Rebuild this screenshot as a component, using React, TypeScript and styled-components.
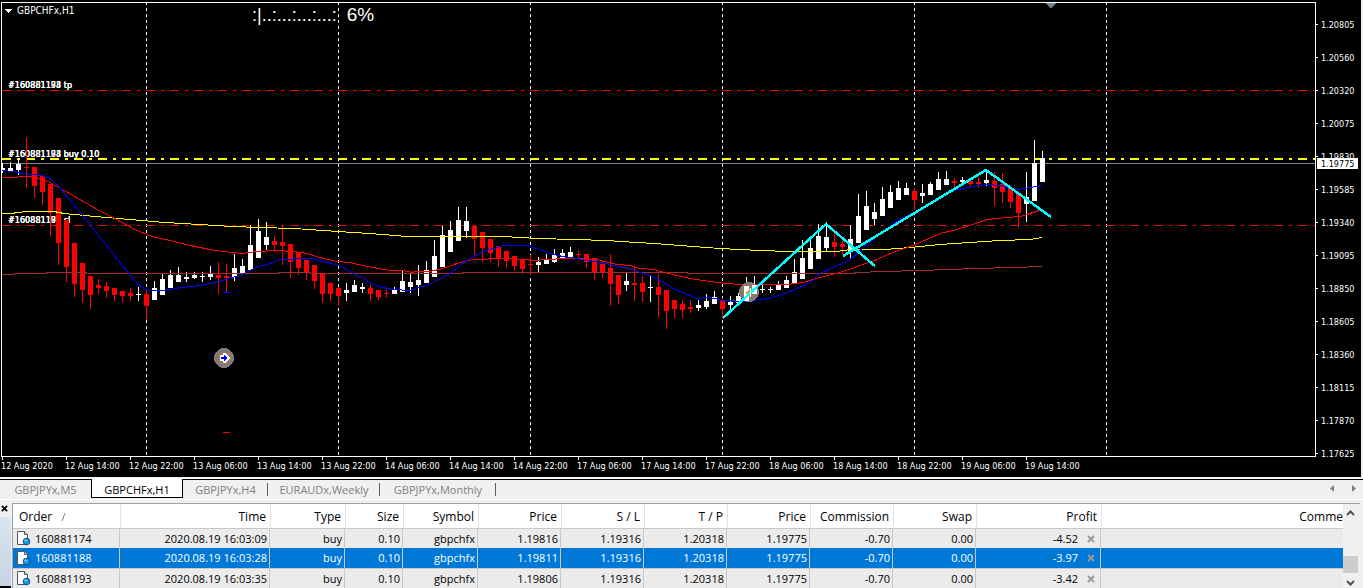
import React from "react";
import styled, { createGlobalStyle } from "styled-components";

const GlobalStyle = createGlobalStyle`
  *, *::before, *::after { box-sizing: border-box; }
  body {
    margin: 0;
    background: #f0f0f0;
    font-family: "Open Sans", "Noto Sans", sans-serif;
    font-size: 11px;
    color: #000;
  }
  button { font: inherit; margin: 0; padding: 0; border: 0; background: none; }
`;

/* ---------- chart data: [direction, high, body top, body bottom, low] ---------- */

type Candle = ["u" | "d", number, number, number, number];

const candles: Candle[] = [
  ["u", 163, 168, 171, 173], ["u", 162, 168, 171, 172], ["u", 158, 164, 170, 175],
  ["d", 137, 167, 168, 188], ["d", 167, 167, 186, 198], ["d", 176, 176, 192, 205],
  ["d", 184, 184, 213, 236], ["d", 198, 198, 243, 265], ["d", 220, 220, 267, 282],
  ["d", 243, 243, 284, 297], ["d", 263, 263, 290, 303], ["d", 276, 276, 295, 309],
  ["d", 279, 285, 288, 294], ["d", 282, 286, 291, 298], ["d", 288, 288, 295, 301],
  ["d", 291, 291, 296, 302], ["d", 288, 293, 296, 301], ["u", 287, 294, 295, 301],
  ["d", 290, 294, 306, 320], ["u", 281, 288, 300, 300], ["u", 274, 279, 295, 295],
  ["u", 270, 275, 288, 288], ["u", 267, 275, 282, 282], ["u", 272, 277, 279, 282],
  ["u", 272, 275, 278, 279], ["u", 272, 276, 277, 282], ["u", 266, 274, 277, 280],
  ["d", 262, 275, 278, 294], ["d", 264, 276, 278, 293], ["u", 254, 268, 277, 281],
  ["u", 259, 266, 273, 273], ["u", 225, 245, 270, 270], ["u", 219, 231, 258, 258],
  ["u", 222, 237, 245, 250], ["d", 236, 241, 245, 252], ["d", 226, 242, 246, 265],
  ["d", 244, 244, 262, 278], ["d", 252, 252, 268, 275], ["d", 260, 260, 273, 280],
  ["d", 265, 265, 281, 289], ["d", 273, 273, 294, 303], ["d", 283, 283, 294, 301],
  ["d", 287, 288, 296, 306], ["u", 283, 290, 293, 301], ["u", 280, 285, 292, 292],
  ["u", 283, 287, 289, 293], ["d", 284, 288, 294, 301], ["d", 290, 290, 297, 300],
  ["d", 290, 293, 294, 298], ["u", 287, 289, 294, 294], ["u", 271, 281, 292, 292],
  ["u", 274, 282, 287, 293], ["u", 265, 280, 285, 296], ["u", 261, 270, 283, 283],
  ["u", 240, 256, 277, 277], ["u", 226, 235, 267, 267], ["u", 221, 230, 252, 252],
  ["u", 207, 220, 241, 241], ["u", 207, 221, 231, 238], ["d", 226, 226, 239, 255],
  ["d", 232, 232, 248, 262], ["d", 239, 239, 253, 262], ["d", 246, 246, 259, 267],
  ["d", 251, 251, 261, 268], ["d", 256, 256, 266, 271], ["d", 260, 260, 269, 274],
  ["d", 255, 264, 265, 275], ["u", 257, 262, 265, 272], ["u", 254, 259, 264, 264],
  ["u", 249, 255, 262, 263], ["u", 249, 253, 259, 259], ["u", 247, 252, 257, 259],
  ["d", 251, 254, 255, 259], ["d", 254, 254, 262, 268], ["d", 258, 258, 272, 280],
  ["d", 261, 264, 273, 278], ["d", 254, 268, 284, 306], ["d", 275, 275, 295, 304],
  ["u", 273, 281, 285, 291], ["d", 267, 283, 285, 301], ["d", 276, 283, 292, 302],
  ["u", 276, 287, 288, 302], ["d", 274, 287, 295, 317], ["d", 290, 290, 311, 329],
  ["d", 300, 300, 309, 318], ["d", 300, 304, 310, 318], ["d", 300, 307, 309, 313],
  ["u", 300, 305, 308, 311], ["u", 294, 301, 307, 309], ["u", 291, 297, 304, 304],
  ["d", 298, 300, 309, 318], ["u", 296, 302, 305, 310], ["u", 293, 296, 303, 303],
  ["u", 277, 286, 301, 301], ["u", 276, 285, 294, 294], ["u", 285, 289, 290, 293],
  ["u", 287, 289, 290, 293], ["u", 281, 284, 290, 290], ["u", 276, 280, 288, 288],
  ["u", 259, 272, 283, 283], ["u", 240, 258, 279, 279], ["u", 236, 248, 269, 269],
  ["u", 224, 236, 259, 259], ["u", 222, 237, 248, 251], ["d", 233, 242, 247, 257],
  ["d", 241, 244, 247, 255], ["u", 225, 239, 251, 258], ["u", 194, 216, 243, 243],
  ["u", 191, 206, 230, 230], ["u", 203, 212, 219, 225], ["u", 187, 199, 216, 216],
  ["u", 185, 192, 208, 208], ["u", 181, 188, 200, 200], ["u", 183, 188, 195, 195],
  ["d", 188, 191, 200, 210], ["u", 184, 193, 196, 203], ["u", 182, 184, 195, 195],
  ["u", 172, 179, 190, 190], ["u", 171, 179, 185, 185], ["d", 178, 181, 183, 188],
  ["u", 177, 180, 182, 183], ["d", 178, 181, 184, 186], ["d", 177, 182, 184, 188],
  ["u", 171, 180, 183, 186], ["d", 172, 181, 188, 206], ["d", 173, 184, 192, 203],
  ["d", 188, 188, 202, 208], ["d", 194, 194, 213, 228], ["u", 172, 197, 204, 222],
  ["u", 140, 163, 201, 201], ["u", 151, 158, 182, 182],
];

const fastAverage =
  "2,170 14,171 24,173 42,175 50,178 58,185 80,212 100,237 120,262 138,284 146,289 152,290 162,290 170,289 182,287 200,285 220,281 230,277 238,276 250,270 258,266 268,264 280,259 313,258 322,261 332,263 343,267 353,273 362,277 370,282 378,286 393,289 410,290 418,287 427,285 443,277 450,273 460,265 470,258 483,251 503,245 527,245 537,248 553,254 563,256 577,258 593,261 603,262 613,265 630,268 640,272 650,275 660,280 675,289 697,298 708,297 715,298 722,300 747,301 773,297 793,290 810,282 820,273 833,267 843,263 853,257 860,250 878,235 895,222 903,217 913,213 930,203 940,196 953,190 973,186 987,184 1000,185 1010,187 1018,189 1030,187 1042,185";
const midAverage =
  "2,177 14,177 22,176 30,176 40,178 50,182 64,190 80,199 97,209 115,218 135,229 152,236 170,240 190,245 210,249 223,251 243,253 257,251 277,250 293,251 307,253 320,257 337,261 350,262 367,266 390,270 403,270 412,272 417,271 430,271 443,268 457,263 473,259 503,258 537,260 543,259 570,258 597,259 617,264 630,265 640,268 653,269 673,274 690,278 717,282 740,284 787,284 803,282 820,277 840,272 860,265 877,259 893,252 910,246 920,242 940,233 953,230 973,224 987,219 1007,217 1020,216 1027,214 1042,209";
const slowAverage =
  "2,213 14,213 15,212 30,211 54,211 64,213 95,216 130,219 165,222 200,224 232,226 260,227 294,228 338,231 370,233 407,236 503,236 537,238 575,239 607,240 620,241 655,243 680,245 720,248 760,250 790,251 837,251 850,249 885,249 910,247 940,244 970,242 1000,240 1030,239 1042,237";
const longAverage =
  "2,274 14,274 15,273 46,273 47,272 86,272 87,273 278,273 279,272 310,272 311,273 462,273 463,272 687,272 688,273 854,273 855,272 885,271 918,270 950,269 974,268 1015,267 1042,266";

const dayLines = [146, 338, 530, 722, 914, 1106];
const tickets = ["#160881174", "#160881188", "#160881193"];

const prices = [
  "1.20805", "1.20560", "1.20320", "1.20075", "1.19830", "1.19585", "1.19340",
  "1.19095", "1.18850", "1.18605", "1.18360", "1.18115", "1.17870", "1.17625",
];

const times = [
  "12 Aug 2020", "12 Aug 14:00", "12 Aug 22:00", "13 Aug 06:00", "13 Aug 14:00",
  "13 Aug 22:00", "14 Aug 06:00", "14 Aug 14:00", "14 Aug 22:00", "17 Aug 06:00",
  "17 Aug 14:00", "17 Aug 22:00", "18 Aug 06:00", "18 Aug 14:00", "18 Aug 22:00",
  "19 Aug 06:00", "19 Aug 14:00",
];

/* ---------- chart ---------- */

const ChartPanel = styled.section`
  display: grid;
  grid-template-columns: minmax(0, 1fr) 45px;
  background: #000;
  color: #fff;
  padding: 2px 0 0 1px;
  margin-right: 2px;
  font-family: "DejaVu Sans Condensed", "DejaVu Sans", sans-serif;
  font-size: 9px;
  line-height: 12px;
`;

const Plot = styled.div`
  position: relative;
  height: 455px;
  border: 1px solid #fff;
  overflow: hidden;
`;

const PlotCanvas = styled.svg`
  display: block;
  width: 100%;
  height: 100%;
`;

const PlotHeader = styled.header`
  position: absolute;
  top: 0;
  left: 0;
  display: flex;
  align-items: flex-start;
  gap: 5px;
  padding: 2px 3px;
`;

const SymbolName = styled.h1`
  margin: 0;
  font: inherit;
  font-size: 10px;
`;

const Spread = styled.output`
  position: absolute;
  top: 1px;
  left: 250px;
  font-family: "Liberation Sans", Arial, sans-serif;
  font-size: 18px;
  line-height: 22px;
  white-space: pre;
`;

const SpreadValue = styled.span`
  font-size: 19px;
`;

const PriceAxis = styled.ul`
  position: relative;
  list-style: none;
  height: 455px;
  margin: 0;
  padding: 6px 0 0;
`;

const PriceLabel = styled.li`
  display: flex;
  align-items: center;
  gap: 3px;
  height: 33px;
  &::before {
    content: "";
    width: 2px;
    height: 1px;
    background: #fff;
  }
`;

const CurrentPrice = styled.li`
  position: absolute;
  top: 156px;
  left: 1px;
  width: 41px;
  height: 11px;
  padding-left: 4px;
  line-height: 12px;
  background: #fff;
  color: #000;
`;

const TimeAxis = styled.ol`
  grid-column: 1 / -1;
  display: flex;
  list-style: none;
  margin: 0;
  padding: 0 0 0 1px;
  height: 20px;
  overflow: hidden;
`;

const TimeLabel = styled.li`
  flex: 0 0 64px;
  white-space: nowrap;
  &::before {
    content: "";
    display: block;
    width: 1px;
    height: 3px;
    background: #fff;
  }
`;

const TimeText = styled.time`
  display: block;
  margin-left: -1px;
`;

function Chart() {
  return (
    <ChartPanel aria-label="GBPCHFx hourly chart">
      <Plot>
        <PlotCanvas role="img" aria-label="Candlestick chart" shapeRendering="crispEdges">
          <g transform="translate(-2 -3)">
            {dayLines.map((x) => (
              <line key={x} x1={x + 0.5} x2={x + 0.5} y1="2" y2="456" stroke="#fff" strokeDasharray="3 3" />
            ))}
            <g strokeDasharray="9 6 3 6">
              <line x1="2" x2="110%" y1="90.5" y2="90.5" stroke="#f00" />
              <line x1="2" x2="110%" y1="159" y2="159" stroke="#ff0" strokeWidth="2" />
              <line x1="2" x2="110%" y1="225.5" y2="225.5" stroke="#e60d0d" />
            </g>
            <line x1="2" x2="110%" y1="163.5" y2="163.5" stroke="#778899" />
            <g fill="#fff" fontSize="9">
              {tickets.map((t) => (
                <React.Fragment key={t}>
                  <text x="8" y="88">{t} tp</text>
                  <text x="8" y="157">{t} buy 0.10</text>
                  <text x="8" y="223">{t} sl</text>
                </React.Fragment>
              ))}
            </g>
            {candles.map(([dir, high, top, bottom, low], i) => {
              const x = 2 + i * 8;
              return (
                <g key={i} fill={dir === "u" ? "#fff" : "#f00"}>
                  <rect x={x} y={high} width="1" height={low - high} />
                  <rect x={x - 2} y={top} width="5" height={bottom - top} />
                </g>
              );
            })}
            <g fill="none" transform="translate(0 0.5)">
              <polyline points={longAverage} stroke="#a52a2a" />
              <polyline points={slowAverage} stroke="#ff0" />
              <polyline points={midAverage} stroke="#f00" />
              <polyline points={fastAverage} stroke="#00f" />
            </g>
            <rect x="223" y="292" width="7" height="1" fill="#00f" />
            <rect x="223" y="432" width="7" height="1" fill="#f00" />
            <circle cx="224" cy="358" r="9.500" fill="#8c7869" stroke="#708090" />
            <path d="M220 355h3v-2h2l5 5-5 5h-2v-2h-3z" fill="#fff" />
            <path d="M221 357h3v-2l4 3-4 3v-2h-3z" fill="#00f" />
            <circle cx="749" cy="292" r="9.500" fill="#8c7869" stroke="#708090" />
            <rect x="744" y="286" width="5" height="15" fill="#fff" />
            <rect x="752" y="285" width="5" height="9" fill="#fff" />
            <path d="M745 293l4-4h2v8h-2z" fill="#daa520" />
            <g fill="none" stroke="#0ff" strokeWidth="2.500">
              <polyline points="723,318 826,224 875,266" />
              <polyline points="843,256 986,170 1051,217" />
            </g>
            <path d="M750 288h1v9h-1z" fill="#fff" />
            <path d="M1045 3h11l-5 5h-1z" fill="#708090" />
          </g>
        </PlotCanvas>
        <PlotHeader>
          <svg width="7" height="10" aria-hidden="true" shapeRendering="crispEdges">
            <path d="M0 4h7L4 8H3z" fill="#fff" />
          </svg>
          <SymbolName>GBPCHFx,H1</SymbolName>
        </PlotHeader>
        <Spread>
          {":|..:...:...:...:  "}
          <SpreadValue>6%</SpreadValue>
        </Spread>
      </Plot>
      <PriceAxis>
        {prices.map((p) => (
          <PriceLabel key={p}>{p}</PriceLabel>
        ))}
        <CurrentPrice>1.19775</CurrentPrice>
      </PriceAxis>
      <TimeAxis>
        {times.map((t) => (
          <TimeLabel key={t}>
            <TimeText>{t}</TimeText>
          </TimeLabel>
        ))}
      </TimeAxis>
    </ChartPanel>
  );
}

/* ---------- chart tabs ---------- */

const TabBar = styled.nav`
  display: flex;
  align-items: stretch;
  height: 21px;
  margin-top: 2px;
  padding-bottom: 1px;
  border-bottom: 1px solid #fff;
  box-shadow: 0 -1px 0 #fff, inset 0 1px 0 #000;
  background: #f0f0f0;
`;

const Tab = styled.button<{ $active?: boolean; $divided?: boolean; $width: number }>`
  position: relative;
  width: ${(p) => p.$width}px;
  padding-top: ${(p) => (p.$active ? 2 : 1)}px;
  color: ${(p) => (p.$active ? "#000" : "#808080")};
  background: ${(p) => (p.$active ? "#fff" : "none")};
  border: solid #000;
  border-width: ${(p) => (p.$active ? "0 1px 1px" : "0")};
  &::after {
    content: "";
    display: ${(p) => (p.$divided ? "block" : "none")};
    position: absolute;
    right: 0;
    top: 4px;
    width: 1px;
    height: 13px;
    background: #606060;
  }
`;

const TabScroll = styled.div`
  display: flex;
  align-items: center;
  gap: 12px;
  margin-left: auto;
  padding: 0 4px 0 0;
`;

const ArrowButton = styled.button`
  display: flex;
  width: 10px;
  height: 10px;
  align-items: center;
  justify-content: center;
`;

const tabs = [
  { name: "GBPJPYx,M5", width: 91, divided: false },
  { name: "GBPCHFx,H1", width: 92, divided: false, active: true },
  { name: "GBPJPYx,H4", width: 85, divided: true },
  { name: "EURAUDx,Weekly", width: 112, divided: true },
  { name: "GBPJPYx,Monthly", width: 116, divided: true },
];

/* ---------- terminal ---------- */

const Terminal = styled.section`
  display: flex;
  height: 85px;
  margin-top: 3px;
  margin-right: 3px;
`;

const SideStrip = styled.aside`
  flex: 0 0 12px;
  display: flex;
  flex-direction: column;
  &::after {
    content: "";
    flex: 1;
    margin-right: 1px;
    background: linear-gradient(#dae5f1, #c5d3e3);
    border-bottom: 2px solid #000;
  }
`;

const CloseButton = styled.button`
  display: flex;
  height: 14px;
  padding: 2px 0 0 1px;
`;

const TableFrame = styled.div`
  flex: 1;
  min-width: 0;
  display: flex;
  overflow: hidden;
  background: #fff;
  border-top: 1px solid #a0a0a0;
  border-left: 1px solid #a0a0a0;
`;

const TableArea = styled.div`
  flex: 1;
  min-width: 0;
`;

const OrderTable = styled.table`
  width: 100%;
  table-layout: fixed;
  border-collapse: separate;
  border-spacing: 0;
  white-space: nowrap;
`;

const HeadCell = styled.th<{ $align?: string; $flush?: boolean }>`
  height: 24px;
  padding: 0 ${(p) => (p.$flush ? 0 : 4)}px 0 6px;
  font-weight: 400;
  font-size: 12px;
  text-align: ${(p) => p.$align || "right"};
  background: #fff;
  & + & { border-left: 1px solid #e2e2e2; }
`;

const SortMark = styled.svg`
  margin-left: 9px;
`;

const Row = styled.tr<{ $selected?: boolean }>`
  color: ${(p) => (p.$selected ? "#fff" : "#000")};
  td {
    background: ${(p) => (p.$selected ? "#0078d7" : "#ebebeb")};
    border-top: ${(p) => (p.$selected ? 0 : 1)}px solid #c8c8c8;
  }
`;

const Cell = styled.td`
  height: 20px;
  padding: 0 2px 0 3px;
  text-align: right;
  line-height: 18px;
  border-right: 1px solid #c8c8c8;
  &:last-child { border-right: 0; }
`;

const OrderId = styled.span`
  display: flex;
  align-items: center;
  gap: 4px;
`;

const ProfitValue = styled.span`
  display: flex;
  align-items: center;
  justify-content: flex-end;
  gap: 9px;
  padding-right: 3px;
`;

const CloseOrder = styled.button`
  display: flex;
`;

const ScrollBar = styled.div`
  flex: 0 0 17px;
  display: flex;
  flex-direction: column;
  align-items: center;
  justify-content: space-between;
  padding: 5px 2px 1px 0;
  background: #f0f0f0;
`;

const Thumb = styled.div`
  width: 15px;
  height: 17px;
  margin: auto 0 6px;
  background: #cdcdcd;
`;

function DocIcon() {
  return (
    <svg width="15" height="15" viewBox="0 0 15 15" aria-hidden="true">
      <path d="M1.500 .5h7l3 3v10h-10z" fill="#fff" stroke="#555" />
      <path d="M8.500 .5v3h3" fill="#ddd" stroke="#555" />
      <circle cx="10.500" cy="10.500" r="3.300" fill="#1e9be0" stroke="#0b4f8a" />
      <circle cx="9.500" cy="9.500" r="1" fill="#8fd4fb" />
    </svg>
  );
}

function CrossIcon({ size, color }: { size: number; color: string }) {
  return (
    <svg width={size} height={size} viewBox="0 0 8 8" aria-hidden="true">
      <path d="M1 1l6 6M7 1L1 7" stroke={color} strokeWidth="2" />
    </svg>
  );
}

function Chevron({ up }: { up?: boolean }) {
  return (
    <svg width="9" height="8" viewBox="0 0 9 8" aria-hidden="true">
      <path d={up ? "M1 6l3.500-3.500L8 6" : "M1 2l3.500 3.500L8 2"} fill="none" stroke="#505050" strokeWidth="2" />
    </svg>
  );
}

const columns = [
  { title: "Order", width: 107 },
  { title: "Time", width: 150 },
  { title: "Type", width: 75 },
  { title: "Size", width: 58 },
  { title: "Symbol", width: 75 },
  { title: "Price", width: 83 },
  { title: "S / L", width: 83 },
  { title: "T / P", width: 83 },
  { title: "Price", width: 83 },
  { title: "Commission", width: 83 },
  { title: "Swap", width: 83 },
  { title: "Profit", width: 125 },
  { title: "Comme", width: undefined },
];

const orders = [
  { id: "160881174", time: "2020.08.19 16:03:09", price: "1.19816", profit: "-4.52" },
  { id: "160881188", time: "2020.08.19 16:03:28", price: "1.19811", profit: "-3.97", selected: true },
  { id: "160881193", time: "2020.08.19 16:03:35", price: "1.19806", profit: "-3.42" },
];

export default function App() {
  return (
    <main>
      <GlobalStyle />
      <Chart />
      <TabBar aria-label="Charts">
        {tabs.map((t) => (
          <Tab key={t.name} type="button" $width={t.width} $active={t.active} $divided={t.divided}>
            {t.name}
          </Tab>
        ))}
        <TabScroll>
          <ArrowButton type="button" aria-label="Scroll tabs left">
            <svg width="4" height="7" aria-hidden="true"><path d="M4 0v7L0 3.500z" fill="#808080" /></svg>
          </ArrowButton>
          <ArrowButton type="button" aria-label="Scroll tabs right">
            <svg width="4" height="7" aria-hidden="true"><path d="M0 0v7l4-3.500z" fill="#808080" /></svg>
          </ArrowButton>
        </TabScroll>
      </TabBar>
      <Terminal aria-label="Terminal">
        <SideStrip>
          <CloseButton type="button" aria-label="Close terminal">
            <CrossIcon size={7} color="#000" />
          </CloseButton>
        </SideStrip>
        <TableFrame>
          <TableArea>
            <OrderTable>
              <colgroup>
                {columns.map((c, i) => (
                  <col key={i} style={{ width: c.width }} />
                ))}
              </colgroup>
              <thead>
                <tr>
                  {columns.map((c, i) => (
                    <HeadCell key={i} scope="col" $align={i === 0 ? "left" : "right"} $flush={c.title === "Comme"}>
                      {c.title}
                      {i === 0 && (
                        <SortMark width="5" height="8" aria-hidden="true">
                          <path d="M1 8L4 0" stroke="#808080" />
                        </SortMark>
                      )}
                    </HeadCell>
                  ))}
                </tr>
              </thead>
              <tbody>
                {orders.map((o) => (
                  <Row key={o.id} $selected={o.selected}>
                    <Cell><OrderId><DocIcon />{o.id}</OrderId></Cell>
                    <Cell>{o.time}</Cell>
                    <Cell>buy</Cell>
                    <Cell>0.10</Cell>
                    <Cell>gbpchfx</Cell>
                    <Cell>{o.price}</Cell>
                    <Cell>1.19316</Cell>
                    <Cell>1.20318</Cell>
                    <Cell>1.19775</Cell>
                    <Cell>-0.70</Cell>
                    <Cell>0.00</Cell>
                    <Cell>
                      <ProfitValue>
                        {o.profit}
                        <CloseOrder type="button" aria-label={`Close order ${o.id}`}>
                          <CrossIcon size={8} color="#999" />
                        </CloseOrder>
                      </ProfitValue>
                    </Cell>
                    <Cell />
                  </Row>
                ))}
              </tbody>
            </OrderTable>
          </TableArea>
          <ScrollBar>
            <Chevron up />
            <Thumb />
            <Chevron />
          </ScrollBar>
        </TableFrame>
      </Terminal>
    </main>
  );
}
